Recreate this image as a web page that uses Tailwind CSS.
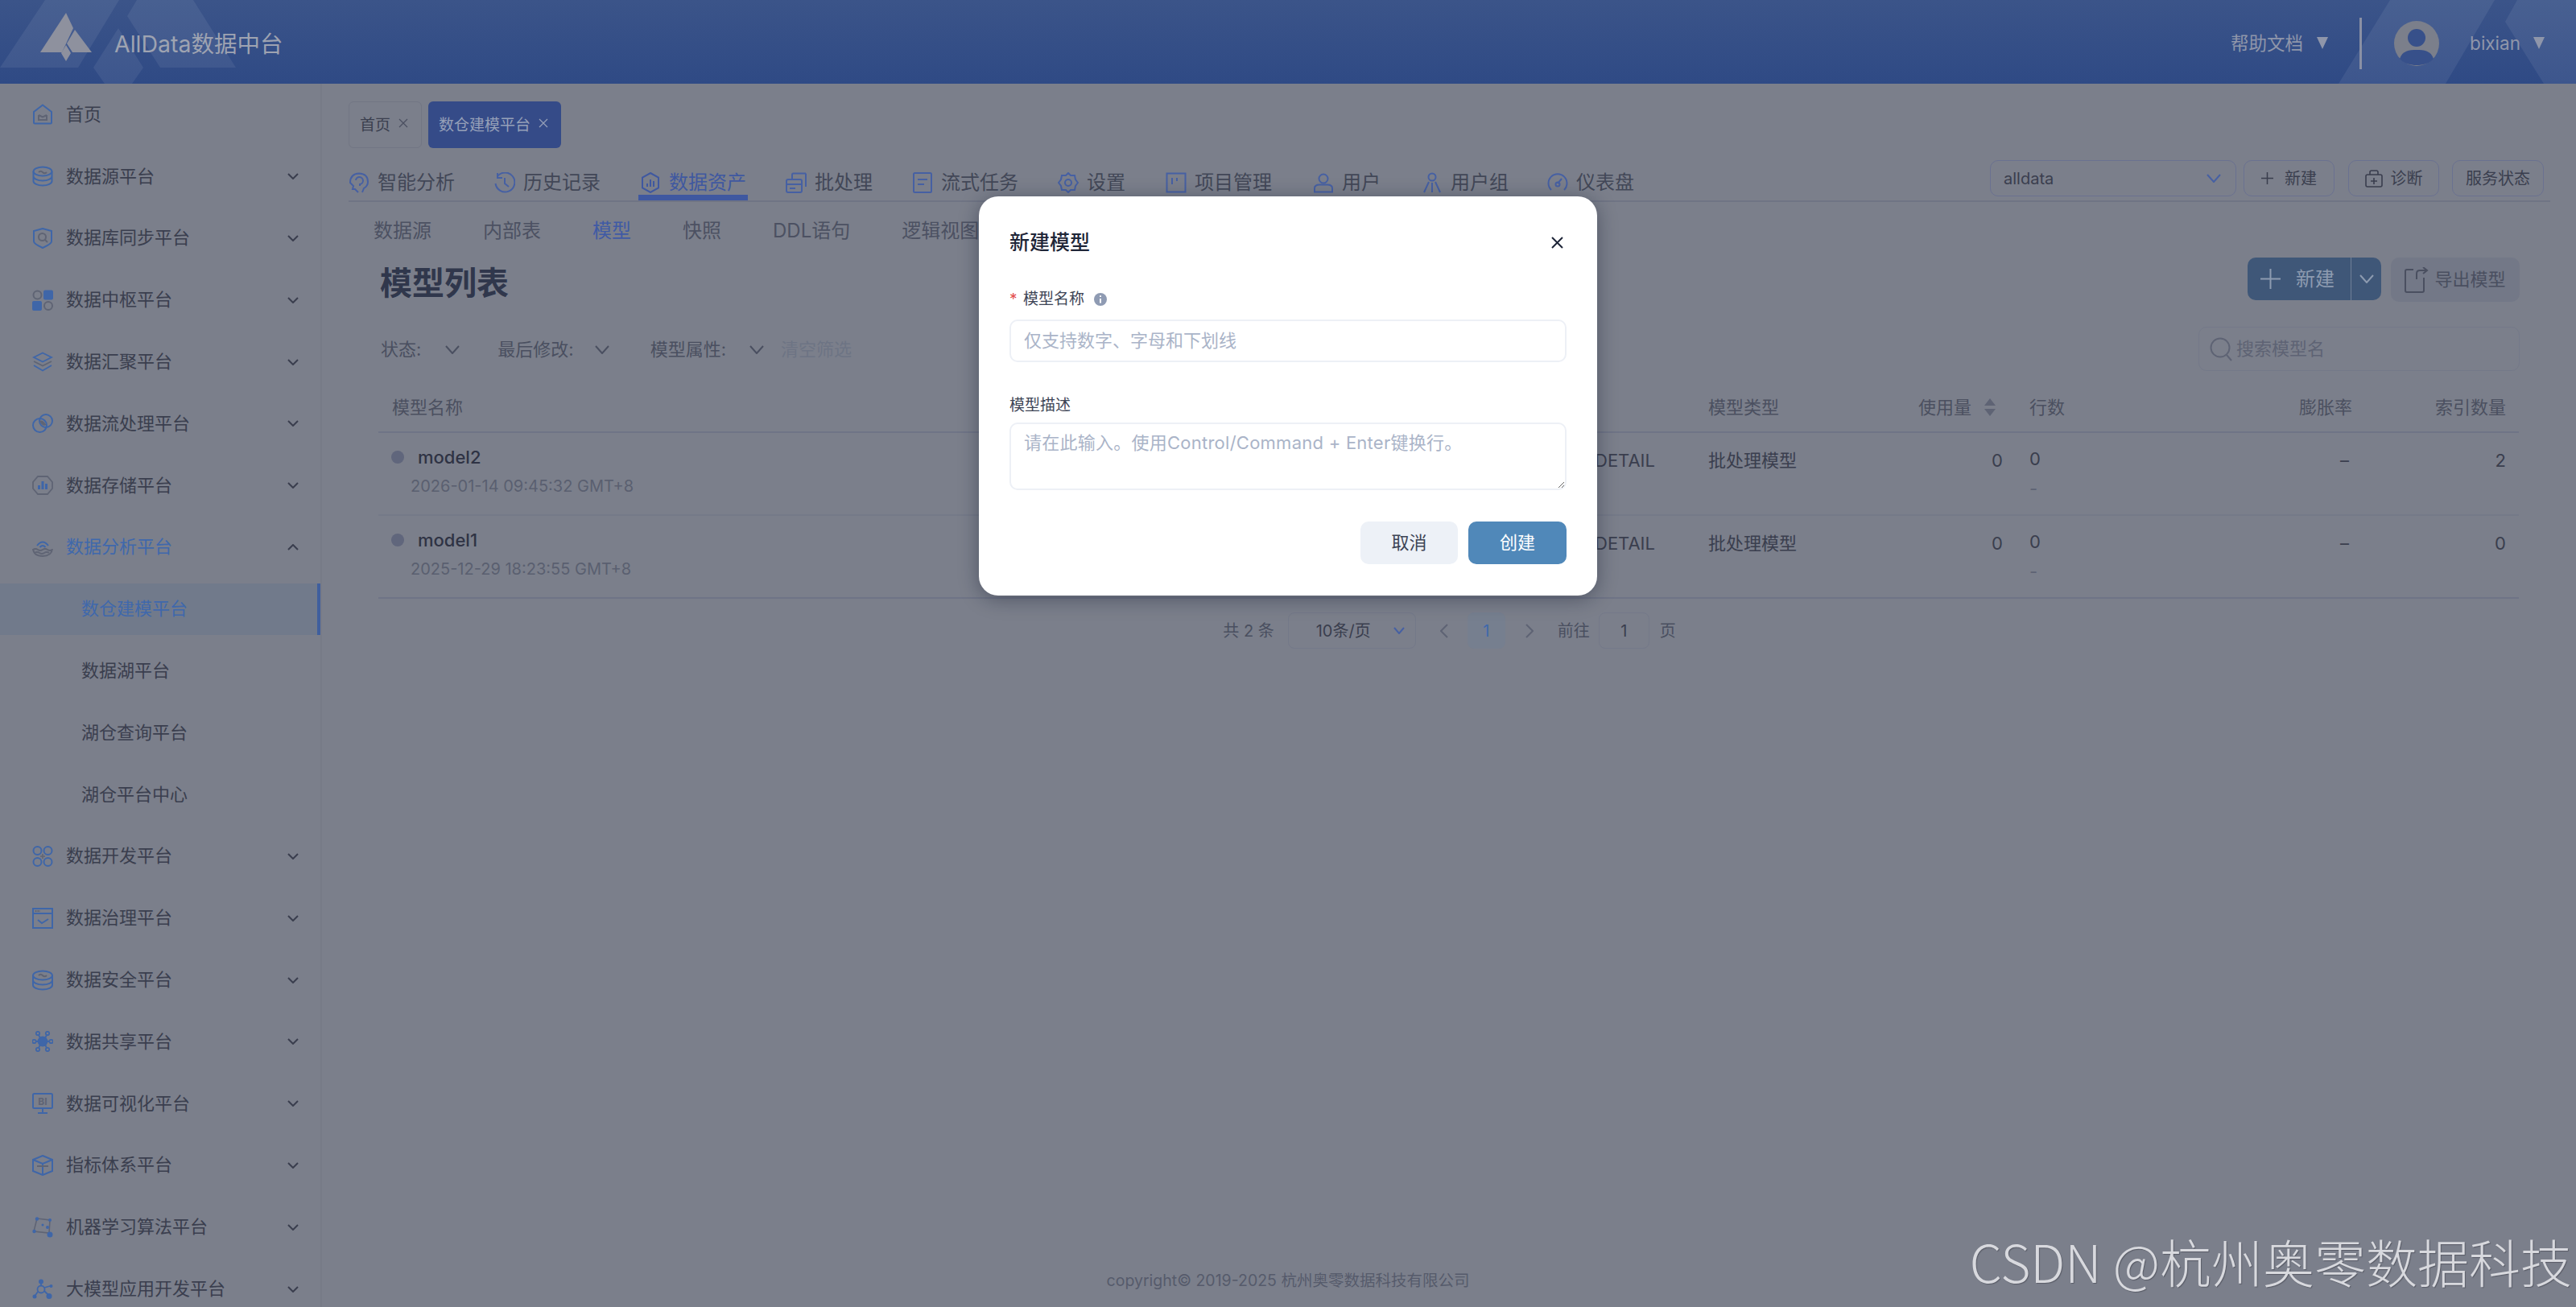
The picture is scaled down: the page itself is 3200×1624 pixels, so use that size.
<!DOCTYPE html>
<html lang="zh-CN">
<head>
  <meta charset="UTF-8" />
  <title>AllData数据中台</title>
  <script src="https://cdn.jsdelivr.net/npm/@tailwindcss/browser@4"></script>
</head>

<body class="relative w-[3200px] h-[1624px] overflow-hidden bg-[#7b7f8b] text-[#3a3e4e] font-[Inter,'Noto_Sans_CJK_SC',sans-serif]">

  <!-- HEADER -->
  <header class="relative h-[104px] overflow-hidden bg-gradient-to-b from-[#3b5489] to-[#2f4a85] flex items-center">
    <svg class="absolute left-0 top-0" width="320" height="104" viewBox="0 0 320 104" fill="#ffffff" fill-opacity="0.07">
      <polygon points="0,84 56,0 148,0 97,84" />
      <polygon points="147,35 178,84 164,104 130,104 116,84" />
      <polygon points="158,20 170,0 240,0 293,84 199,84" />
    </svg>
    <svg class="absolute right-0 top-0" width="300" height="104" viewBox="0 0 300 104" fill="#ffffff" fill-opacity="0.07">
      <polygon points="5,104 69,0 199,0 138,104" />
      <polygon points="163,104 212,27 227,0 300,0 300,104 260,104 212,27" />
    </svg>
    <svg class="relative ml-[50px] mb-[12px] shrink-0" width="64" height="60" viewBox="0 0 64 60" fill="#8e919e">
      <polygon points="32,0 41,19 27,49 0,49" />
      <polygon points="43,21 64,49 40,49 33,38" />
      <polygon points="32,40 38,50 32,60 26,50" />
    </svg>
    <span class="relative ml-[28px] pt-[6px] text-[28.5px] text-[#9ea3b1]">AllData数据中台</span>
    <div class="relative ml-auto mt-[3px] flex items-center text-[22.5px] text-[#8f96aa]">
      <span>帮助文档</span>
      <span class="ml-[17px] w-0 h-0 border-x-[7px] border-x-transparent border-t-[15px] border-t-[#8f96aa]"></span>
      <span class="ml-[39px] w-[3px] h-[64px] bg-[#8a90a4]"></span>
      <svg class="ml-[40px]" width="56" height="56" viewBox="0 0 56 56">
        <circle cx="28" cy="28" r="28" fill="#7b7f8b" />
        <ellipse cx="28" cy="21" rx="11" ry="11" fill="#37508a" />
        <path d="M7 47 C10 37 19 36 28 36 C37 36 46 37 49 47 C44 53 36 55 28 55 C20 55 12 53 7 47 Z" fill="#37508a" />
      </svg>
      <span class="ml-[38px] text-[#8f96aa]">bixian</span>
      <span class="ml-[16px] mr-[39px] w-0 h-0 border-x-[7px] border-x-transparent border-t-[15px] border-t-[#8f96aa]"></span>
    </div>
  </header>

  <div class="flex h-[1520px]">
    <!-- SIDEBAR -->
    <aside class="w-[400px] shrink-0 border-r-2 border-[#777b87] text-[22px] overflow-hidden">
      <a class="flex items-center h-[76.8px] pl-[40px]">
        <svg class="w-[26px] h-[26px] shrink-0" viewBox="0 0 26 26" fill="none" stroke-width="2"><path d="M13 1.5 L24 10 V23 a1.5 1.5 0 0 1-1.5 1.5 H3.500 a1.500 1.500 0 0 1-1.500-1.500 V10 Z" stroke="#3f66a8" /><path d="M8 14 v6 h10 v-6 M8 14 l5 2.500 l5-2.500" stroke="#5f6474" /></svg>
        <span class="ml-[16px]">首页</span>
      </a>

      <a class="flex items-center h-[76.8px] pl-[40px]">
        <svg class="w-[26px] h-[26px] shrink-0" viewBox="0 0 26 26" fill="none" stroke="#3f66a8" stroke-width="2"><ellipse cx="13" cy="7" rx="11.500" ry="5.500" /><path d="M1.500 7 v6 c0 3 5 5.500 11.500 5.500 s11.500-2.500 11.500-5.500 v-6 M1.500 13 v6 c0 3 5 5.500 11.500 5.500 s11.500-2.500 11.500-5.500 v-6" /><path d="M8 8 q2.500-2.500 5 0 t5 0" stroke="#5f6474" /></svg>
        <span class="ml-[16px]">数据源平台</span>
        <svg class="ml-auto mr-[27px] w-[14px] h-[8px]" viewBox="0 0 14 8" fill="none" stroke="#3a3e4e" stroke-width="2"><path d="M1 1 L7 7 L13 1" /></svg>
      </a>

      <a class="flex items-center h-[76.8px] pl-[40px]">
        <svg class="w-[26px] h-[26px] shrink-0" viewBox="0 0 26 26" fill="none" stroke-width="2"><path d="M13 1 L24 4 V17 Q24 20 13 25 Q2 20 2 17 V4 Z" stroke="#3f66a8" /><circle cx="12.500" cy="11.500" r="4.500" stroke="#5f6474" /><path d="M16 15 L19 18" stroke="#5f6474" /></svg>
        <span class="ml-[16px]">数据库同步平台</span>
        <svg class="ml-auto mr-[27px] w-[14px] h-[8px]" viewBox="0 0 14 8" fill="none" stroke="#3a3e4e" stroke-width="2"><path d="M1 1 L7 7 L13 1" /></svg>
      </a>

      <a class="flex items-center h-[76.8px] pl-[40px]">
        <svg class="w-[26px] h-[26px] shrink-0" viewBox="0 0 26 26"><circle cx="6.500" cy="6.500" r="5" fill="none" stroke="#5f6474" stroke-width="2" /><rect x="14" y="0.500" width="12" height="12" rx="2" fill="#3f66a8" /><rect x="0" y="14" width="12" height="12" rx="2" fill="#3f66a8" /><circle cx="20" cy="20" r="5" fill="none" stroke="#5f6474" stroke-width="2" /></svg>
        <span class="ml-[16px]">数据中枢平台</span>
        <svg class="ml-auto mr-[27px] w-[14px] h-[8px]" viewBox="0 0 14 8" fill="none" stroke="#3a3e4e" stroke-width="2"><path d="M1 1 L7 7 L13 1" /></svg>
      </a>

      <a class="flex items-center h-[76.8px] pl-[40px]">
        <svg class="w-[26px] h-[26px] shrink-0" viewBox="0 0 26 26" fill="none" stroke="#3f66a8" stroke-width="1.800"><path d="M13 1.500 L24 7 L13 12.500 L2 7 Z" /><path d="M2 12 L13 17.500 L24 12" stroke="#5f6474" /><path d="M2 17 L13 23.500 L24 17" /></svg>
        <span class="ml-[16px]">数据汇聚平台</span>
        <svg class="ml-auto mr-[27px] w-[14px] h-[8px]" viewBox="0 0 14 8" fill="none" stroke="#3a3e4e" stroke-width="2"><path d="M1 1 L7 7 L13 1" /></svg>
      </a>

      <a class="flex items-center h-[76.8px] pl-[40px]">
        <svg class="w-[26px] h-[26px] shrink-0" viewBox="0 0 26 26" fill="none" stroke="#3f66a8" stroke-width="2"><circle cx="9.500" cy="15.500" r="8.500" /><circle cx="17" cy="10" r="8" /><path d="M9 10 Q13 8 17.500 15 Q13 18 9 10 Z" fill="#5f6474" stroke="none" /></svg>
        <span class="ml-[16px]">数据流处理平台</span>
        <svg class="ml-auto mr-[27px] w-[14px] h-[8px]" viewBox="0 0 14 8" fill="none" stroke="#3a3e4e" stroke-width="2"><path d="M1 1 L7 7 L13 1" /></svg>
      </a>

      <a class="flex items-center h-[76.8px] pl-[40px]">
        <svg class="w-[26px] h-[26px] shrink-0" viewBox="0 0 26 26" fill="none"><path d="M7 2 H19 L25 9 V17 L19 24 H7 L1 17 V9 Z" stroke="#5f6474" stroke-width="1.800" /><path d="M7 18 V13 H10 V18 Z M11.500 18 V8 H14.500 V18 Z M16 18 V11 H19 V18 Z" fill="#3f66a8" /></svg>
        <span class="ml-[16px]">数据存储平台</span>
        <svg class="ml-auto mr-[27px] w-[14px] h-[8px]" viewBox="0 0 14 8" fill="none" stroke="#3a3e4e" stroke-width="2"><path d="M1 1 L7 7 L13 1" /></svg>
      </a>

      <a class="flex items-center h-[76.8px] pl-[40px] text-[#3f68ac]">
        <svg class="w-[26px] h-[26px] shrink-0" viewBox="0 0 26 26" fill="none" stroke-width="2"><path d="M6 11 Q13 2 20 11 M9.500 13 Q13 9 16.500 13" stroke="#3f66a8" /><path d="M1 16 Q4 14 7 16 T13 16 T19 16 T25 16 M3 20 Q6 18 9 20 T15 20 T21 20 M1 15 Q2 24 13 24 Q24 24 25 15" stroke="#5f6474" /></svg>
        <span class="ml-[16px]">数据分析平台</span>
        <svg class="ml-auto mr-[27px] w-[14px] h-[8px]" viewBox="0 0 14 8" fill="none" stroke="#3a3e4e" stroke-width="2"><path d="M1 7 L7 1 L13 7" /></svg>
      </a>

      <a class="flex items-center h-[64px] my-[6.4px] pl-[101px] bg-[#717a8b] border-r-[4px] border-[#3f5f9e] text-[#3f68ac]">数仓建模平台</a>
      <a class="flex items-center h-[76.8px] pl-[101px]">数据湖平台</a>
      <a class="flex items-center h-[76.8px] pl-[101px]">湖仓查询平台</a>
      <a class="flex items-center h-[76.8px] pl-[101px]">湖仓平台中心</a>

      <a class="flex items-center h-[76.8px] pl-[40px]">
        <svg class="w-[26px] h-[26px] shrink-0" viewBox="0 0 26 26" fill="none" stroke="#3f66a8" stroke-width="2"><circle cx="6.500" cy="6" r="5" /><circle cx="19.500" cy="6" r="5" /><circle cx="6.500" cy="20" r="5" /><circle cx="19.500" cy="20" r="5" /><path d="M13 10 V16 M10 13 H16" stroke="#5f6474" stroke-width="1.500" /></svg>
        <span class="ml-[16px]">数据开发平台</span>
        <svg class="ml-auto mr-[27px] w-[14px] h-[8px]" viewBox="0 0 14 8" fill="none" stroke="#3a3e4e" stroke-width="2"><path d="M1 1 L7 7 L13 1" /></svg>
      </a>

      <a class="flex items-center h-[76.8px] pl-[40px]">
        <svg class="w-[26px] h-[26px] shrink-0" viewBox="0 0 26 26" fill="none" stroke="#3f66a8" stroke-width="2"><rect x="1" y="1" width="24" height="24" /><path d="M1 7 H25" /><path d="M3.500 4 H10" stroke="#5f6474" stroke-dasharray="2 1" /><path d="M7 15 L12 19 L20 14" /></svg>
        <span class="ml-[16px]">数据治理平台</span>
        <svg class="ml-auto mr-[27px] w-[14px] h-[8px]" viewBox="0 0 14 8" fill="none" stroke="#3a3e4e" stroke-width="2"><path d="M1 1 L7 7 L13 1" /></svg>
      </a>

      <a class="flex items-center h-[76.8px] pl-[40px]">
        <svg class="w-[26px] h-[26px] shrink-0" viewBox="0 0 26 26" fill="none" stroke="#3f66a8" stroke-width="2"><ellipse cx="13" cy="7" rx="12" ry="5.500" /><path d="M1 7 v6 c0 3 5 5.500 12 5.500 s12-2.500 12-5.500 v-6 M1 13 v6 c0 3 5 5.500 12 5.500 s12-2.500 12-5.500 v-6" /><path d="M8 7 q2.500-2.500 5 0 t5 0" stroke="#5f6474" /></svg>
        <span class="ml-[16px]">数据安全平台</span>
        <svg class="ml-auto mr-[27px] w-[14px] h-[8px]" viewBox="0 0 14 8" fill="none" stroke="#3a3e4e" stroke-width="2"><path d="M1 1 L7 7 L13 1" /></svg>
      </a>

      <a class="flex items-center h-[76.8px] pl-[40px]">
        <svg class="w-[26px] h-[26px] shrink-0" viewBox="0 0 26 26" fill="none" stroke="#3f66a8" stroke-width="1.800"><circle cx="13" cy="13" r="5.500" fill="#3f66a8" /><circle cx="7" cy="3" r="2.200" /><circle cx="19" cy="3" r="2.200" /><circle cx="2.500" cy="13" r="2.200" /><circle cx="23.500" cy="13" r="2.200" /><circle cx="7" cy="23" r="2.200" /><circle cx="19" cy="23" r="2.200" /><path d="M8 5 L10 9 M18 5 L16 9 M5 13 H8 M21 13 H18 M8 21 L10 17 M18 21 L16 17" /></svg>
        <span class="ml-[16px]">数据共享平台</span>
        <svg class="ml-auto mr-[27px] w-[14px] h-[8px]" viewBox="0 0 14 8" fill="none" stroke="#3a3e4e" stroke-width="2"><path d="M1 1 L7 7 L13 1" /></svg>
      </a>

      <a class="flex items-center h-[76.8px] pl-[40px]">
        <svg class="w-[26px] h-[26px] shrink-0" viewBox="0 0 26 26" fill="none" stroke="#3f66a8" stroke-width="2"><rect x="1" y="1" width="24" height="18" rx="1.500" /><path d="M13 19 V24 M7 25 H19" /><text x="13" y="15" text-anchor="middle" font-size="12" font-weight="700" fill="#5f6474" stroke="none">BI</text></svg>
        <span class="ml-[16px]">数据可视化平台</span>
        <svg class="ml-auto mr-[27px] w-[14px] h-[8px]" viewBox="0 0 14 8" fill="none" stroke="#3a3e4e" stroke-width="2"><path d="M1 1 L7 7 L13 1" /></svg>
      </a>

      <a class="flex items-center h-[76.8px] pl-[40px]">
        <svg class="w-[26px] h-[26px] shrink-0" viewBox="0 0 26 26" fill="none" stroke="#3f66a8" stroke-width="2"><path d="M13 1 L25 6 V20 L13 25 L1 20 V6 Z M1 6 L13 11 L25 6 M13 11 V25" /><path d="M6 14 H20" stroke="#5f6474" /></svg>
        <span class="ml-[16px]">指标体系平台</span>
        <svg class="ml-auto mr-[27px] w-[14px] h-[8px]" viewBox="0 0 14 8" fill="none" stroke="#3a3e4e" stroke-width="2"><path d="M1 1 L7 7 L13 1" /></svg>
      </a>

      <a class="flex items-center h-[76.8px] pl-[40px]">
        <svg class="w-[26px] h-[26px] shrink-0" viewBox="0 0 26 26" fill="#3f66a8" stroke="#5f6474" stroke-width="1.600"><path d="M6 2 L22 4 L21 20 L2 18 Z" fill="none" /><circle cx="6" cy="2.500" r="2.200" stroke="none" /><circle cx="22" cy="4" r="2" stroke="none" /><circle cx="2.500" cy="18" r="2.200" stroke="none" /><circle cx="22" cy="22" r="3.500" stroke="none" /><circle cx="19" cy="13" r="2" stroke="none" /><circle cx="13" cy="10" r="1.500" stroke="none" /></svg>
        <span class="ml-[16px]">机器学习算法平台</span>
        <svg class="ml-auto mr-[27px] w-[14px] h-[8px]" viewBox="0 0 14 8" fill="none" stroke="#3a3e4e" stroke-width="2"><path d="M1 1 L7 7 L13 1" /></svg>
      </a>

      <a class="flex items-center h-[76.8px] pl-[40px]">
        <svg class="w-[26px] h-[26px] shrink-0" viewBox="0 0 26 26" fill="#3f66a8" stroke="#3f66a8" stroke-width="1.800"><circle cx="11" cy="13" r="4.500" fill="none" /><circle cx="11" cy="3.500" r="3" stroke="none" /><circle cx="3" cy="22" r="2.500" stroke="none" /><circle cx="21" cy="21.500" r="3.500" stroke="none" /><circle cx="23.500" cy="9" r="2" stroke="none" /><path d="M11 5 V9 M7 16 L3.500 21 M15 15 L20 20 M15 11 L22 9" /></svg>
        <span class="ml-[16px]">大模型应用开发平台</span>
        <svg class="ml-auto mr-[27px] w-[14px] h-[8px]" viewBox="0 0 14 8" fill="none" stroke="#3a3e4e" stroke-width="2"><path d="M1 1 L7 7 L13 1" /></svg>
      </a>
    </aside>

    <!-- MAIN -->
    <main class="flex-1 pl-[33px] pr-[32px] flex flex-col">
      <!-- tags -->
      <div class="flex gap-[8px] mt-[22px] h-[58px] text-[19px]">
        <div class="flex items-center pl-[13px] pr-[16px] rounded-[6px] border border-[#727684]">
          <span class="pt-[2px]">首页</span>
          <svg class="ml-[10px] mb-[4px] w-[12px] h-[12px]" viewBox="0 0 12 12" fill="none" stroke="#4a4f60" stroke-width="1.200"><path d="M1 1 L11 11 M11 1 L1 11" /></svg>
        </div>
        <div class="flex items-center pl-[13px] pr-[16px] rounded-[6px] bg-[#354b88] text-[#96a0b8]">
          <span class="pt-[2px]">数仓建模平台</span>
          <svg class="ml-[10px] mb-[4px] w-[12px] h-[12px]" viewBox="0 0 12 12" fill="none" stroke="#96a0b8" stroke-width="1.200"><path d="M1 1 L11 11 M11 1 L1 11" /></svg>
        </div>
      </div>

      <!-- tabs -->
      <div class="flex justify-between h-[67px] border-b-[2px] border-[#6f7484]">
        <nav class="flex -ml-[2px] text-[24px] text-[#424757]">
          <a class="flex items-center gap-[10px] px-[2px] mr-[45px] h-[65px] pt-[27px] border-b-[7px] border-transparent">
            <svg class="w-[26px] h-[26px]" viewBox="0 0 26 26" fill="none" stroke="#4660a3" stroke-width="2"><path d="M12 25 L8 21 H5 L6 17 L2 13 Q2 2 13 1.500 Q24 2 24 12 Q24 17 19 20 L17 25" /><path d="M9 10 a4.500 4.500 0 1 1 5 5 V17" /></svg>
            <span>智能分析</span>
          </a>
          <a class="flex items-center gap-[10px] px-[2px] mr-[45px] h-[65px] pt-[27px] border-b-[7px] border-transparent">
            <svg class="w-[26px] h-[26px]" viewBox="0 0 26 26" fill="none" stroke="#4660a3" stroke-width="2"><path d="M4 5 A12 12 0 1 1 1.500 14" /><path d="M4 1 V7 H10" /><path d="M13 7 V14 L18 18" /></svg>
            <span>历史记录</span>
          </a>
          <a class="flex items-center gap-[10px] px-[2px] mr-[45px] h-[65px] pt-[27px] border-b-[7px] border-[#3f58a0] text-[#3f58a0]">
            <svg class="w-[26px] h-[26px]" viewBox="0 0 26 26" fill="none" stroke="#3f58a0" stroke-width="2"><path d="M13 1 L23 6.500 V19.500 L13 25 L3 19.500 V6.500 Z" /><path d="M9 18 V14 M13 18 V9 M17 18 V11" /></svg>
            <span>数据资产</span>
          </a>
          <a class="flex items-center gap-[10px] px-[2px] mr-[45px] h-[65px] pt-[27px] border-b-[7px] border-transparent">
            <svg class="w-[26px] h-[26px]" viewBox="0 0 26 26" fill="none" stroke="#4660a3" stroke-width="2"><path d="M8 8 V3 a1.500 1.500 0 0 1 1.500-1.500 H25 M25 1.500 V18" /><rect x="1" y="9" width="19" height="16" rx="2" /><path d="M1 15 H20 M5 20 H12" /></svg>
            <span>批处理</span>
          </a>
          <a class="flex items-center gap-[10px] px-[2px] mr-[45px] h-[65px] pt-[27px] border-b-[7px] border-transparent">
            <svg class="w-[26px] h-[26px]" viewBox="0 0 26 26" fill="none" stroke="#4660a3" stroke-width="2"><rect x="2" y="1" width="22" height="24" rx="1.500" /><path d="M7 9 H19 M7 15 H15" /></svg>
            <span>流式任务</span>
          </a>
          <a class="flex items-center gap-[10px] px-[2px] mr-[46px] h-[65px] pt-[27px] border-b-[7px] border-transparent">
            <svg class="w-[26px] h-[26px]" viewBox="0 0 26 26" fill="none" stroke="#4660a3" stroke-width="2"><path d="M13 1 L16 4 L21 4 L22 9 L25 13 L22 17 L21 22 L16 22 L13 25 L10 22 L5 22 L4 17 L1 13 L4 9 L5 4 L10 4 Z" /><circle cx="13" cy="13" r="4" /></svg>
            <span>设置</span>
          </a>
          <a class="flex items-center gap-[10px] px-[2px] mr-[47px] h-[65px] pt-[27px] border-b-[7px] border-transparent">
            <svg class="w-[26px] h-[26px]" viewBox="0 0 26 26" fill="none" stroke="#4660a3" stroke-width="2"><rect x="1.500" y="1.500" width="23" height="23" /><path d="M8 7 V15 M14 7 V11" /></svg>
            <span>项目管理</span>
          </a>
          <a class="flex items-center gap-[10px] px-[2px] mr-[47px] h-[65px] pt-[27px] border-b-[7px] border-transparent">
            <svg class="w-[26px] h-[26px]" viewBox="0 0 26 26" fill="none" stroke="#4660a3" stroke-width="2"><circle cx="13" cy="8" r="5.500" /><path d="M2 24.500 V20 Q2 15.500 8 15.500 H18 Q24 15.500 24 20 V24.500 Z" /></svg>
            <span>用户</span>
          </a>
          <a class="flex items-center gap-[10px] px-[2px] mr-[44px] h-[65px] pt-[27px] border-b-[7px] border-transparent">
            <svg class="w-[26px] h-[26px]" viewBox="0 0 26 26" fill="none" stroke="#4660a3" stroke-width="2"><circle cx="13" cy="6" r="4.500" /><path d="M9 12 L3 25 M17 12 L23 25 M13 13 V25" /></svg>
            <span>用户组</span>
          </a>
          <a class="flex items-center gap-[10px] px-[2px] h-[65px] pt-[27px] border-b-[7px] border-transparent">
            <svg class="w-[26px] h-[26px]" viewBox="0 0 26 26" fill="none" stroke="#4660a3" stroke-width="2"><path d="M5 22 A11.500 11.500 0 1 1 21 22" /><path d="M13 14 L18 8" /><circle cx="13" cy="15" r="2.500" /></svg>
            <span>仪表盘</span>
          </a>
        </nav>

        <div class="flex self-end mb-[5px] mr-[8px] text-[20px] text-[#3a3e4e]">
          <div class="flex items-center justify-between w-[306px] h-[45px] px-[16px] rounded-[10px] border border-[#6a7190]">
            <span>alldata</span>
            <svg class="mr-[2px] w-[18px] h-[11px]" viewBox="0 0 18 11" fill="none" stroke="#4660a3" stroke-width="2"><path d="M1 1 L9 10 L17 1" /></svg>
          </div>
          <button class="flex items-center justify-center gap-[14px] ml-[9px] w-[113px] h-[45px] rounded-[10px] border border-[#6a7190]">
            <svg class="w-[15px] h-[15px]" viewBox="0 0 15 15" stroke="#3a3e4e" stroke-width="1.500"><path d="M7.500 0 V15 M0 7.500 H15" /></svg>
            <span>新建</span>
          </button>
          <button class="flex items-center justify-center gap-[10px] ml-[17px] w-[113px] h-[45px] rounded-[10px] border border-[#6a7190]">
            <svg class="w-[22px] h-[22px]" viewBox="0 0 22 22" fill="none" stroke="#3a3e4e" stroke-width="1.600"><rect x="1" y="6" width="20" height="15" rx="2" /><path d="M6 6 V3 a2 2 0 0 1 2-2 h6 a2 2 0 0 1 2 2 v3 M11 10 V18 M7 14 H15" /></svg>
            <span>诊断</span>
          </button>
          <button class="flex items-center justify-center ml-[16px] w-[114px] h-[45px] rounded-[10px] border border-[#6a7190]">服务状态</button>
        </div>
      </div>

      <!-- sub tabs -->
      <div class="flex items-center gap-[64px] h-[72px] pl-[31px] text-[24px] text-[#4c5162]">
        <a>数据源</a>
        <a>内部表</a>
        <a class="text-[#3f5aa5]">模型</a>
        <a>快照</a>
        <a>DDL语句</a>
        <a>逻辑视图</a>
      </div>

      <!-- title row -->
      <div class="flex justify-between items-start -mt-[3px] h-[60px] pl-[39px] pr-[38px]">
        <h2 class="pt-[2px] text-[40px] leading-[60px] font-bold text-[#30374c]">模型列表</h2>
        <div class="flex gap-[12px] text-[24px]">
          <div class="flex w-[166px] h-[53px] rounded-[10px] bg-[#3f5778] text-[#8d9bb0]">
            <button class="flex flex-1 items-center justify-center gap-[19px] pr-[4px] border-r border-[#6f7f98]">
              <svg class="w-[25px] h-[25px]" viewBox="0 0 25 25" stroke="#8d9bb0" stroke-width="2"><path d="M12.500 0 V25 M0 12.500 H25" /></svg>
              <span>新建</span>
            </button>
            <button class="flex w-[37px] items-center justify-center">
              <svg class="w-[18px] h-[11px]" viewBox="0 0 18 11" fill="none" stroke="#8d9bb0" stroke-width="2"><path d="M1 1 L9 10 L17 1" /></svg>
            </button>
          </div>
          <button class="flex items-center justify-center gap-[7px] w-[160px] h-[55px] rounded-[10px] bg-[#737887] text-[#4a4f60] text-[22px]">
            <svg class="w-[30px] h-[32px]" viewBox="0 0 30 32" fill="none" stroke="#4a4f60" stroke-width="2"><path d="M11 3 H3 a2 2 0 0 0-2 2 V29 a2 2 0 0 0 2 2 H22 a2 2 0 0 0 2-2 V13" /><path d="M15 15 V8 Q15 4 19 4 H27 M23 0 L28 4 L23 8" /></svg>
            <span>导出模型</span>
          </button>
        </div>
      </div>

      <!-- filters -->
      <div class="flex items-center mt-[26px] h-[55px] pl-[40px] pr-[38px] text-[22px] text-[#4a4f60]">
        <div class="flex items-center pt-[2px]">
          <span>状态:</span>
          <svg class="ml-[30px] w-[18px] h-[11px]" viewBox="0 0 18 11" fill="none" stroke="#4a4f60" stroke-width="2"><path d="M1 1 L9 10 L17 1" /></svg>
          <span class="ml-[47px]">最后修改:</span>
          <svg class="ml-[26px] w-[18px] h-[11px]" viewBox="0 0 18 11" fill="none" stroke="#4a4f60" stroke-width="2"><path d="M1 1 L9 10 L17 1" /></svg>
          <span class="ml-[51px]">模型属性:</span>
          <svg class="ml-[29px] w-[18px] h-[11px]" viewBox="0 0 18 11" fill="none" stroke="#4a4f60" stroke-width="2"><path d="M1 1 L9 10 L17 1" /></svg>
          <span class="ml-[21px] text-[#6d7484]">清空筛选</span>
        </div>
        <div class="ml-auto flex items-center gap-[5px] w-[399px] h-[55px] pl-[13px] rounded-[10px] border border-[#747989] text-[#5e6374]">
          <svg class="w-[28px] h-[30px]" viewBox="0 0 28 30" fill="none" stroke="#5e6374" stroke-width="2"><circle cx="13" cy="13" r="11.500" /><path d="M21 22 L27 29" /></svg>
          <span>搜索模型名</span>
        </div>
      </div>

      <!-- table -->
      <div class="mt-[15px] ml-[37px] mr-[39px] text-[22px]">
        <div class="grid grid-cols-[1503px_149px_178px_188px_248px_186px_191px] h-[62px] items-center border-b-2 border-[#6f7486] text-[#4b5060]">
          <div class="pl-[17px] pt-[1px]">模型名称</div>
          <div></div>
          <div class="pt-[1px]">模型类型</div>
          <div class="flex justify-end items-center gap-[15px] pr-[8px]">
            <span class="pt-[1px]">使用量</span>
            <svg class="w-[16px] h-[24px]" viewBox="0 0 16 24" fill="#5e6374"><path d="M8 1 L15 10 H1 Z M8 23 L1 14 H15 Z" /></svg>
          </div>
          <div class="pl-[33px] pt-[1px]">行数</div>
          <div class="text-right pt-[1px]">膨胀率</div>
          <div class="text-right pt-[1px]">索引数量</div>
        </div>

        <div class="grid grid-cols-[1503px_149px_178px_188px_248px_186px_191px] h-[103px] border-b-2 border-[#757a88] leading-[28px]">
          <div class="pl-[16px] pt-[16px]">
            <div class="flex items-center gap-[17px]">
              <span class="w-[16px] h-[16px] rounded-full bg-[#60667c]"></span>
              <span class="font-medium text-[#2f3344]">model2</span>
            </div>
            <div class="mt-[8px] pl-[24px] text-[20px] text-[#5a5f70]">2026-01-14 09:45:32 GMT+8</div>
          </div>
          <div class="pt-[20px] pl-[8px]">DETAIL</div>
          <div class="pt-[20px]">批处理模型</div>
          <div class="pt-[20px] text-right">0</div>
          <div class="pl-[33px] pt-[18px]">0<div class="mt-[9px] text-[#5e6374]">-</div></div>
          <div class="pt-[20px] pr-[4px] text-right">–</div>
          <div class="pt-[20px] text-right">2</div>
        </div>

        <div class="grid grid-cols-[1503px_149px_178px_188px_248px_186px_191px] h-[103px] border-b-2 border-[#6f7486] leading-[28px]">
          <div class="pl-[16px] pt-[16px]">
            <div class="flex items-center gap-[17px]">
              <span class="w-[16px] h-[16px] rounded-full bg-[#60667c]"></span>
              <span class="font-medium text-[#2f3344]">model1</span>
            </div>
            <div class="mt-[8px] pl-[24px] text-[20px] text-[#5a5f70]">2025-12-29 18:23:55 GMT+8</div>
          </div>
          <div class="pt-[20px] pl-[8px]">DETAIL</div>
          <div class="pt-[20px]">批处理模型</div>
          <div class="pt-[20px] text-right">0</div>
          <div class="pl-[33px] pt-[18px]">0<div class="mt-[9px] text-[#5e6374]">-</div></div>
          <div class="pt-[20px] pr-[4px] text-right">–</div>
          <div class="pt-[20px] text-right">0</div>
        </div>
      </div>

      <!-- pagination -->
      <div class="flex justify-center items-center mt-[17px] text-[20px] text-[#4a4f60]">
        <span>共 2 条</span>
        <div class="relative flex items-center ml-[17px] w-[159px] h-[45px] pl-[34px] rounded-[8px] border border-[#747989] text-[#3a3e4e]">
          <span>10条/页</span>
          <svg class="absolute right-[13px] w-[14px] h-[9px]" viewBox="0 0 14 9" fill="none" stroke="#4660a3" stroke-width="2"><path d="M1 1 L7 8 L13 1" /></svg>
        </div>
        <svg class="ml-[30px] w-[10px] h-[18px]" viewBox="0 0 10 18" fill="none" stroke="#5e6374" stroke-width="2"><path d="M9 1 L1 9 L9 17" /></svg>
        <span class="flex items-center justify-center ml-[24px] w-[47px] h-[45px] rounded-[8px] bg-[#767f8f] text-[#3f68ac]">1</span>
        <svg class="ml-[25px] w-[10px] h-[18px]" viewBox="0 0 10 18" fill="none" stroke="#5e6374" stroke-width="2"><path d="M1 1 L9 9 L1 17" /></svg>
        <span class="ml-[30px]">前往</span>
        <span class="flex items-center justify-center ml-[11px] w-[63px] h-[45px] rounded-[8px] border border-[#747989] text-[#3a3e4e]">1</span>
        <span class="ml-[13px]">页</span>
      </div>
    </main>
  </div>

  <footer class="absolute bottom-[19px] left-0 w-full text-center text-[19.5px] leading-[28px] text-[#565b6b]">copyright© 2019-2025 杭州奥零数据科技有限公司</footer>

  <!-- MODAL -->
  <div class="absolute inset-0 flex justify-center items-start pt-[244px]">
    <div class="w-[768px] h-[496px] rounded-[24px] bg-white px-[38px] pt-[38px] shadow-[0_4px_24px_rgba(15,23,42,0.4)]">
      <div class="flex items-center justify-between h-[38px] pt-[1px]">
        <h3 class="text-[25px] font-medium text-[#1f2638]">新建模型</h3>
        <svg class="mr-[4px] w-[15px] h-[15px]" viewBox="0 0 15 15" fill="none" stroke="#1f2638" stroke-width="2"><path d="M1 1 L14 14 M14 1 L1 14" /></svg>
      </div>
      <div class="flex items-center mt-[39px] h-[24px] pt-[2px] text-[19px] text-[#3d4455]">
        <span class="w-[17px] text-[#e34d4d]">*</span>
        <span>模型名称</span>
        <svg class="ml-[12px] w-[16px] h-[16px]" viewBox="0 0 16 16"><circle cx="8" cy="8" r="8" fill="#8f9bb3" /><path d="M8 3.200 V5 M8 7 V12.500" stroke="#ffffff" stroke-width="2" /></svg>
      </div>
      <input type="text" placeholder="仅支持数字、字母和下划线" class="block w-full h-[53px] mt-[14px] px-[16px] pb-[2px] rounded-[10px] border-2 border-[#edf0f6] text-[22px] outline-none placeholder:text-[#aab4c8]" />
      <div class="mt-[40px] h-[24px] pt-[2px] leading-[24px] text-[19px] text-[#3d4455]">模型描述</div>
      <textarea rows="2" placeholder="请在此输入。使用Control/Command + Enter键换行。" class="block w-full h-[84px] mt-[11px] px-[16px] py-[8px] rounded-[10px] border-2 border-[#edf0f6] text-[22px] leading-[30px] tracking-[0.25px] outline-none resize-y placeholder:text-[#aab4c8]"></textarea>
      <div class="flex justify-end gap-[13px] mt-[39px] text-[22px]">
        <button class="w-[121px] h-[53px] rounded-[10px] bg-[#edf1f7] text-[#3d4455]">取消</button>
        <button class="w-[122px] h-[53px] rounded-[10px] bg-[#5088b9] text-white">创建</button>
      </div>
    </div>
  </div>

  <!-- watermark -->
  <div class="absolute bottom-[20px] right-[5px] text-[64px] leading-[76px] font-['Noto_Sans_CJK_SC',sans-serif] font-light text-[#d8d9de] [text-shadow:1px_1px_1px_#5a5d68]">CSDN @杭州奥零数据科技</div>

</body>
</html>
